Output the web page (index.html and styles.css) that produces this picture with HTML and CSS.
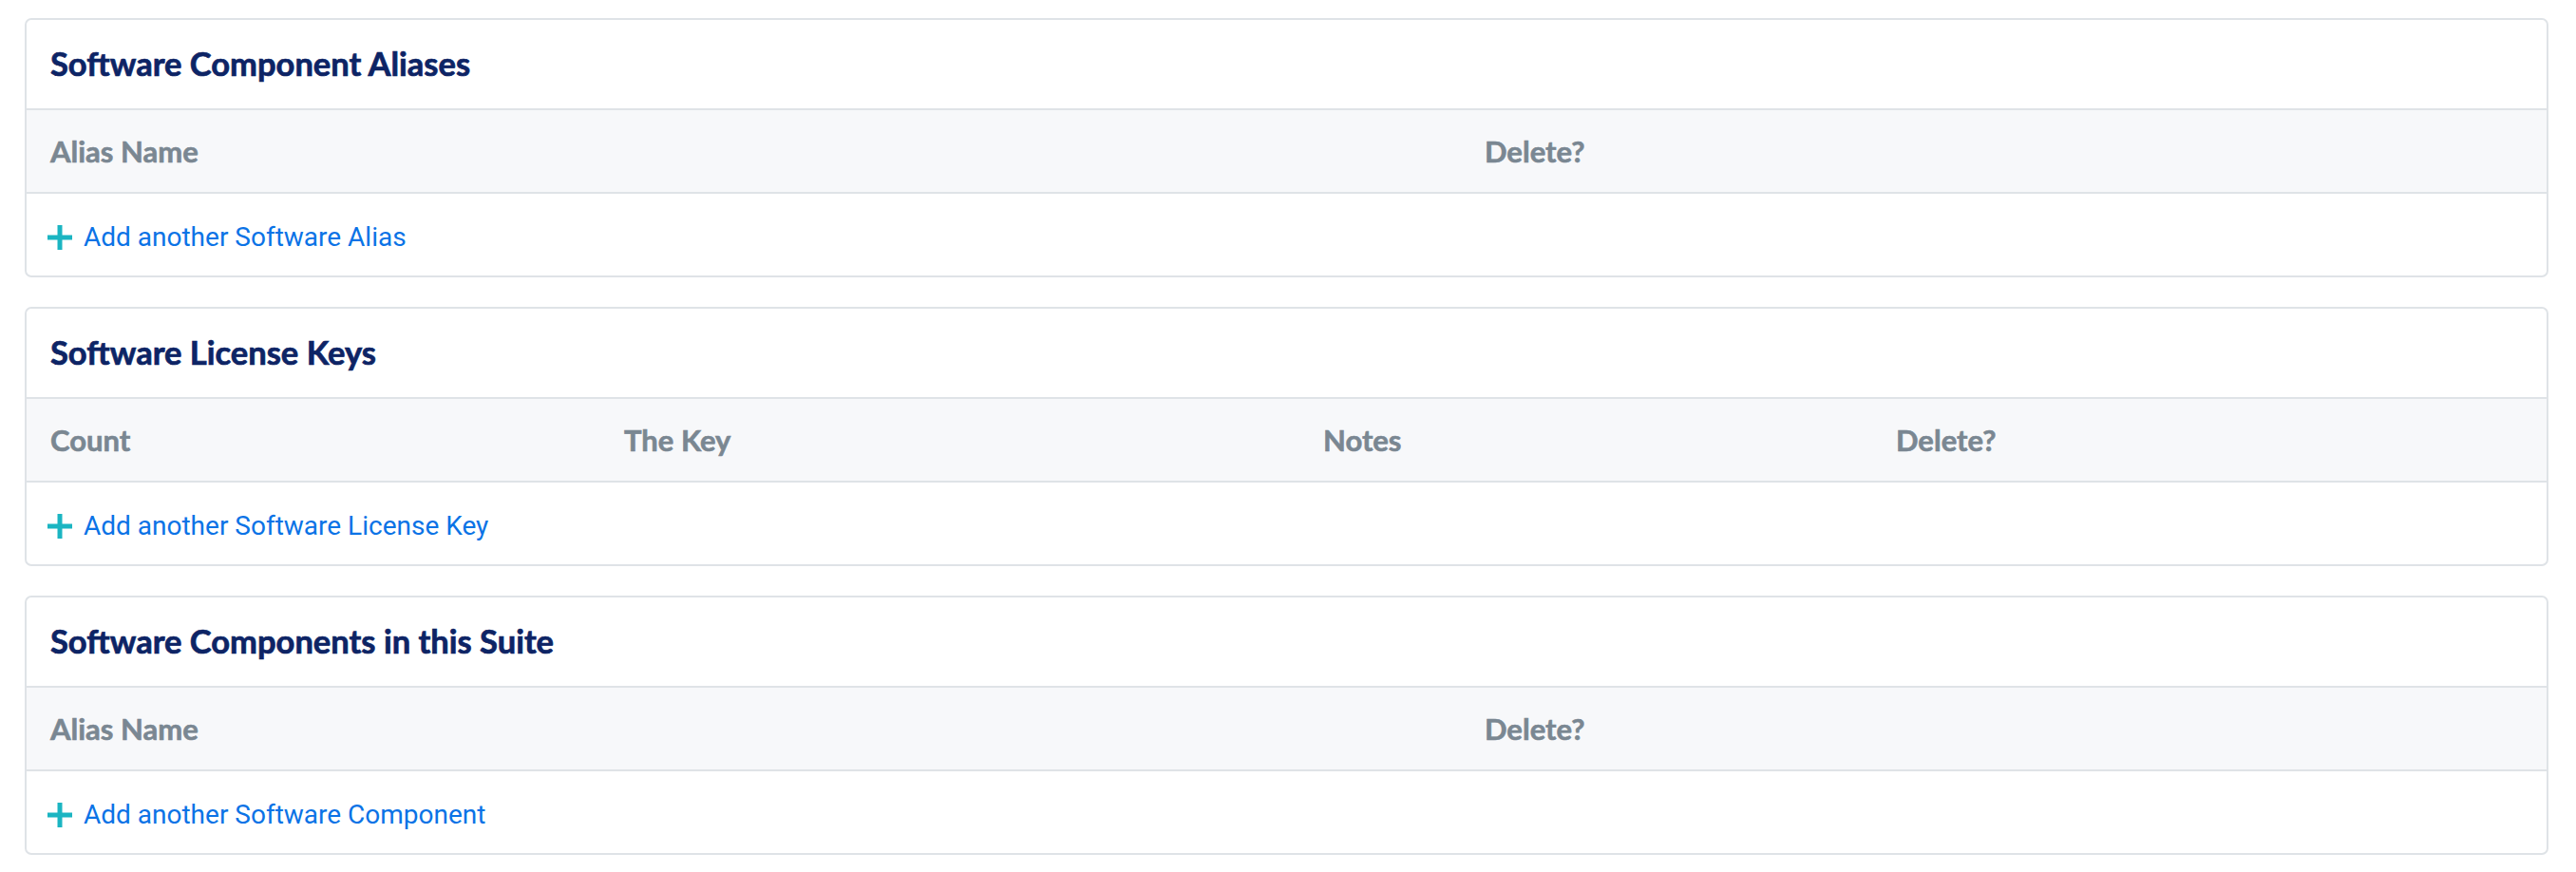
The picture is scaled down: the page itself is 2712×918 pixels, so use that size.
FILE: index.html
```html
<!DOCTYPE html>
<html lang="en">
<head>
<meta charset="utf-8">
<title>Software</title>
<link rel="stylesheet" href="styles.css">
</head>
<body>
<div class="page">
  <section class="card">
    <div class="card-header"><h2 class="card-title">Software Component Aliases</h2></div>
    <div class="thead cols-2">
      <div class="th">Alias Name</div>
      <div class="th">Delete?</div>
    </div>
    <div class="add-row">
      <a class="add-link" href="#"><svg class="plus" viewBox="0 0 28 28" width="28" height="28"><path d="M14 1V27M1 14H27" stroke="#1bb5c2" stroke-width="5" fill="none"/></svg><span>Add another Software Alias</span></a>
    </div>
  </section>

  <section class="card">
    <div class="card-header"><h2 class="card-title">Software License Keys</h2></div>
    <div class="thead cols-4">
      <div class="th">Count</div>
      <div class="th">The Key</div>
      <div class="th">Notes</div>
      <div class="th">Delete?</div>
    </div>
    <div class="add-row">
      <a class="add-link" href="#"><svg class="plus" viewBox="0 0 28 28" width="28" height="28"><path d="M14 1V27M1 14H27" stroke="#1bb5c2" stroke-width="5" fill="none"/></svg><span>Add another Software License Key</span></a>
    </div>
  </section>

  <section class="card">
    <div class="card-header"><h2 class="card-title">Software Components in this Suite</h2></div>
    <div class="thead cols-2">
      <div class="th">Alias Name</div>
      <div class="th">Delete?</div>
    </div>
    <div class="add-row">
      <a class="add-link" href="#"><svg class="plus" viewBox="0 0 28 28" width="28" height="28"><path d="M14 1V27M1 14H27" stroke="#1bb5c2" stroke-width="5" fill="none"/></svg><span>Add another Software Component</span></a>
    </div>
  </section>
</div>
</body>
</html>
```

FILE: styles.css
```css
* { box-sizing: border-box; }
html, body { margin: 0; padding: 0; background: #ffffff; }
.page {
  padding: 19px 29px 0 26px;
  display: flex;
  flex-direction: column;
  gap: 31px;
}
.card {
  border: 2px solid #dfe3e7;
  border-radius: 7px;
  background: #fff;
  overflow: hidden;
}
.card-header {
  height: 95px;
  display: flex;
  align-items: center;
  padding: 0 25px;
  border-bottom: 2px solid #dfe3e7;
}
.card-title {
  margin: 0;
  font-family: Lato, "Liberation Sans", sans-serif;
  font-weight: 700;
  font-size: 34.5px;
  color: #0d2465;
  line-height: 1;
  -webkit-text-stroke: 0.7px #0d2465;
}
.thead {
  display: grid;
  height: 88px;
  align-items: center;
  background: #f7f8fa;
  border-bottom: 2px solid #dfe3e7;
}
.cols-2 { grid-template-columns: 1510px 1fr; }
.cols-4 { grid-template-columns: 604px 736px 603px 1fr; }
.th {
  padding: 0 25px;
  font-family: Lato, "Liberation Sans", sans-serif;
  font-weight: 700;
  font-size: 31px;
  color: #7a8792;
  line-height: 1;
  -webkit-text-stroke: 0.6px #7a8792;
}
.add-row {
  height: 86px;
  display: flex;
  align-items: center;
  padding: 5px 21px 0;
}
.add-link {
  display: flex;
  align-items: center;
  gap: 11px;
  text-decoration: none;
  color: #0b73e6;
  font-family: Roboto, "Liberation Sans", sans-serif;
  font-size: 28px;
  line-height: 1;
}
.plus { display: block; flex: none; }
```
